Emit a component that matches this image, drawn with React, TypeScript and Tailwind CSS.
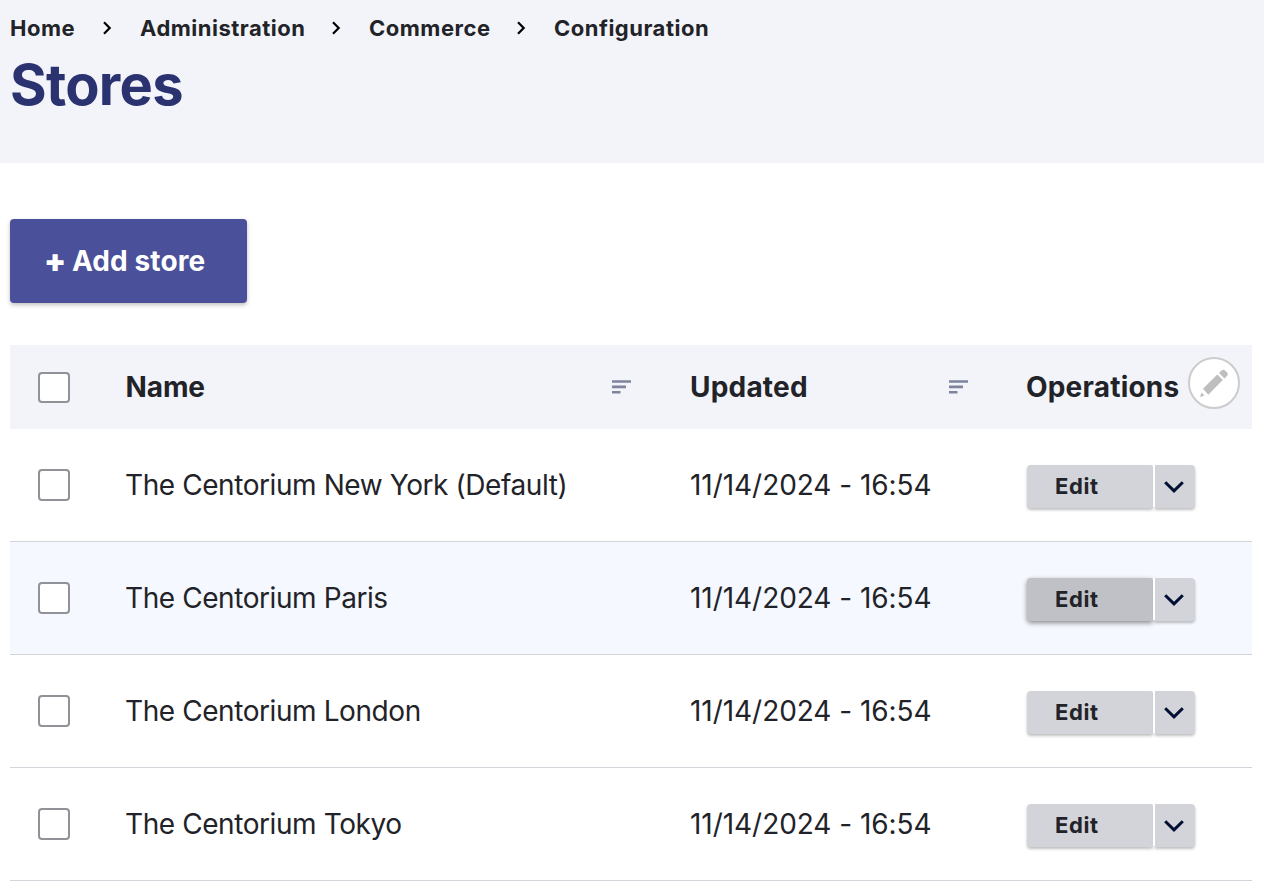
import React from "react";

const stores = [
  "The Centorium New York (Default)",
  "The Centorium Paris",
  "The Centorium London",
  "The Centorium Tokyo",
];

function Chevron() {
  return (
    <svg width="10" height="14" viewBox="0 0 10 14" fill="none" stroke="#000" strokeWidth="2.2">
      <path d="M1 1.2l5.700 5.800-5.700 5.800" />
    </svg>
  );
}

function Checkbox() {
  return <span className="block h-8 w-8 rounded-[4px] border-2 border-[#919297] bg-white" />;
}

function SortIcon() {
  return (
    <svg width="20" height="14" viewBox="0 0 20 14" fill="#7e849d">
      <path d="M0 .2h19v2.6H0zM0 5.6h14v2.6H0zM0 10.9h8.5v2.6H0z" />
    </svg>
  );
}

function Operations({ active }: { active: boolean }) {
  return (
    <div className="ml-px mt-[3px] flex h-[43px] w-[168px]">
      <button
        className={
          active
            ? "w-[126px] rounded-l-[4px] rounded-r-[2px] bg-[#c0c1c6] pl-7 text-left text-[22px] font-bold tracking-[0.6px] shadow-[0_2px_5px_rgba(0,0,0,0.45)]"
            : "w-[126px] rounded-l-[4px] rounded-r-[2px] bg-[#d3d4d9] pl-7 text-left text-[22px] font-bold tracking-[0.6px] shadow-[0_2px_3px_rgba(0,0,0,0.25)]"
        }
      >
        Edit
      </button>
      <button className="ml-[2px] flex w-10 items-center justify-center rounded-r-[4px] bg-[#d3d4d9] pr-[2px] shadow-[0_2px_3px_rgba(0,0,0,0.25)]">
        <svg width="20" height="14" viewBox="0 0 20 14" fill="none" stroke="#000f33" strokeWidth="3">
          <path d="M1.2 2.2l8.8 8.6 8.8-8.6" />
        </svg>
      </button>
      <span className="relative -ml-[42px] h-[42px] w-[2px] bg-white" />
    </div>
  );
}

export default function App() {
  return (
    <div className="h-[890px] w-[1264px] overflow-hidden bg-white font-['Inter',sans-serif] text-[#222328]">
      <header className="h-[163px] bg-[#f3f4f9] pl-[10px] pt-3">
        <nav className="flex h-8 items-center text-[22px] font-bold tracking-[0.5px]">
          <span className="w-[93px]">Home</span>
          <span className="w-[37px]"><Chevron /></span>
          <span className="w-[192px]">Administration</span>
          <span className="w-[37px]"><Chevron /></span>
          <span className="w-[148px]">Commerce</span>
          <span className="w-[37px]"><Chevron /></span>
          <span>Configuration</span>
        </nav>
        <h1 className="mt-[5px] text-[56px] font-bold leading-[72px] tracking-[-0.7px] text-[#2b3270]">Stores</h1>
      </header>
      <main className="px-[10px] pt-14">
        <button className="flex h-[84px] w-[237px] items-center rounded-[4px] bg-[#4a5099] pl-[34px] text-[28px] font-bold tracking-[0.1px] text-white shadow-[0_2px_4px_rgba(0,0,0,0.25)]">
          <span className="w-[28px] text-left text-[32px] font-black leading-[42px]">+</span>
          <span>Add store</span>
        </button>
        <div className="mt-[42px] w-[1242px]">
          <div className="relative grid h-[84px] grid-cols-[116px_564px_336px_226px] items-center bg-[#f3f4f9] text-[28px] font-bold tracking-[0.2px]">
            <div className="pl-7"><span className="mt-px block h-[31px] w-8 rounded-[4px] border-2 border-[#919297] bg-white" /></div>
            <div className="flex items-center justify-between pr-[58px]"><span className="-ml-[0.5px] tracking-[-0.1px]">Name</span><SortIcon /></div>
            <div className="flex items-center justify-between pr-[57px]">Updated<SortIcon /></div>
            <div>Operations</div>
            <div className="absolute right-3 top-3 flex h-[52px] w-[52px] items-center justify-center rounded-full border-2 border-[#ccc] bg-white">
              <svg width="28" height="28" viewBox="0 0 28 28" fill="#bebebe">
                <path d="M0 28l1.500-4.500 3 3zM3 19.700L17.300 5.400l5.500 5.700L8.300 25.700zM19 4l2.500-2.500q2-1.500 3.500 0l2 2q1.500 1.500 0 3.500L24.500 9.500z" />
              </svg>
            </div>
          </div>
          {stores.map((name, i) => (
            <div
              key={name}
              className={
                i === 1
                  ? "grid h-[113px] grid-cols-[116px_564px_336px_226px] items-center border-b border-[#d3d4d9] bg-[#f5f8ff] text-[28px]"
                  : "grid h-[113px] grid-cols-[116px_564px_336px_226px] items-center border-b border-[#d3d4d9] text-[28px]"
              }
            >
              <div className="pl-7"><Checkbox /></div>
              <div className="-ml-px tracking-[-0.42px]">{name}</div>
              <div className="tracking-[-0.05px]">11/14/2024 - 16:54</div>
              <Operations active={i === 1} />
            </div>
          ))}
        </div>
      </main>
    </div>
  );
}
